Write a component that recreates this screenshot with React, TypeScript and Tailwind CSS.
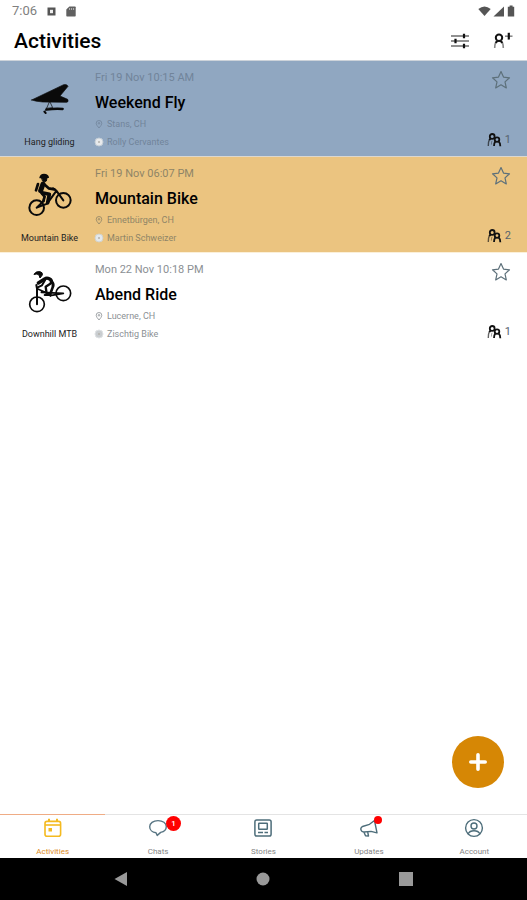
import type { ReactNode } from 'react';
import clsx from 'clsx';

interface Activity {
  id: number;
  sport: string;
  icon: ReactNode;
  date: string;
  title: string;
  place: string;
  host: string;
  participants: number;
  rowClass: string;
  textClass: string;
  avatarClass: string;
}

interface Tab {
  label: string;
  icon: ReactNode;
  badge?: string;
  dot?: boolean;
}

const activities: Activity[] = [
  {
    id: 1,
    sport: 'Hang gliding',
    icon: <HangGliderIcon />,
    date: 'Fri 19 Nov 10:15 AM',
    title: 'Weekend Fly',
    place: 'Stans, CH',
    host: 'Rolly Cervantes',
    participants: 1,
    rowClass: 'bg-[#90a7c1] border-[#cdd3da]',
    textClass: 'text-[#71849a]',
    avatarClass: 'fill-[#e8eaec] stroke-[#c3cdd6]',
  },
  {
    id: 2,
    sport: 'Mountain Bike',
    icon: <MountainBikeIcon />,
    date: 'Fri 19 Nov 06:07 PM',
    title: 'Mountain Bike',
    place: 'Ennetbürgen, CH',
    host: 'Martin Schweizer',
    participants: 2,
    rowClass: 'bg-[#ebc480] border-[#dcd8cf]',
    textClass: 'text-[#8f8467]',
    avatarClass: 'fill-[#e3e8ec] stroke-[#d2d3cc]',
  },
  {
    id: 3,
    sport: 'Downhill MTB',
    icon: <DownhillIcon />,
    date: 'Mon 22 Nov 10:18 PM',
    title: 'Abend Ride',
    place: 'Lucerne, CH',
    host: 'Zischtig Bike',
    participants: 1,
    rowClass: 'bg-white border-[#fbf0d9]',
    textClass: 'text-[#8b9094]',
    avatarClass: 'fill-[#c9cdd0] stroke-[#dfe2e4]',
  },
];

const tabs: Tab[] = [
  { label: 'Activities', icon: <CalendarIcon /> },
  { label: 'Chats', icon: <ChatIcon />, badge: '1' },
  { label: 'Stories', icon: <StoriesIcon /> },
  { label: 'Updates', icon: <MegaphoneIcon />, dot: true },
  { label: 'Account', icon: <AccountIcon /> },
];

export default function App() {
  return (
    <div className="flex min-h-screen flex-col bg-white font-[Roboto,sans-serif] text-black">
      <StatusBar />

      <header className="flex h-[38px] items-center justify-between px-3.5">
        <h1 className="text-[21px] leading-6 font-medium">Activities</h1>
        <div className="flex items-center gap-6">
          <button type="button" aria-label="Filter">
            <FilterIcon />
          </button>
          <button type="button" aria-label="Add friend">
            <AddPersonIcon />
          </button>
        </div>
      </header>

      <main className="relative flex-1">
        <ul>
          {activities.map((activity) => (
            <ActivityRow key={activity.id} activity={activity} />
          ))}
        </ul>
        <button
          type="button"
          aria-label="New activity"
          className="absolute right-[23px] bottom-[26px] flex size-[52px] items-center justify-center rounded-full bg-[#d68705]"
        >
          <svg viewBox="0 0 18 18" className="size-[18px]" fill="none" stroke="white" strokeWidth="3.6" strokeLinecap="round">
            <path d="M9 1.8v14.4M1.8 9h14.4" />
          </svg>
        </button>
      </main>

      <TabBar active="Activities" />
      <SystemNav />
    </div>
  );
}

function StatusBar() {
  return (
    <div className="flex h-[22px] items-center justify-between px-3 text-[#808080]">
      <div className="flex items-center gap-2.5">
        <span className="text-[13px] leading-4">7:06</span>
        <svg viewBox="0 0 9 9" className="size-[9px]">
          <path d="M.5.5h8v8h-8z" fill="#555" />
          <path d="M3 2.8h3v3.4H3z" fill="#eee" />
        </svg>
        <svg viewBox="0 0 10 11" className="h-[11px] w-[10px]">
          <path d="M3.4.5H9q.7 0 .7.7v8.6q0 .7-.7.7H1q-.7 0-.7-.7V3.6z" fill="#606060" />
          <path d="M3.6 2v2M5.6 2v2M7.6 2v2" stroke="#ccc" strokeWidth=".8" />
        </svg>
      </div>
      <div className="flex items-center gap-0.5">
        <svg viewBox="0 0 13 10" className="h-[10px] w-[13px]" fill="#555">
          <path d="M.3 3Q6.5-2.2 12.7 3L6.5 10z" />
        </svg>
        <svg viewBox="0 0 12 11" className="h-[11px] w-[12px]" fill="#555">
          <path d="M11 .5v10H.5z" />
        </svg>
        <svg viewBox="0 0 8 12" className="h-3 w-2" fill="#555">
          <path d="M2.600.5h3v1.200h1.600v9.800H.8V1.700h1.800z" />
        </svg>
      </div>
    </div>
  );
}

function ActivityRow({ activity }: { activity: Activity }) {
  return (
    <li className={clsx('flex border-t pb-2', activity.rowClass)}>
      {/* Sport */}
      <div className="flex w-[95px] shrink-0 flex-col items-center justify-between pt-[13px] pl-1">
        {activity.icon}
        <span className="text-[9px] leading-3 text-[#222]">{activity.sport}</span>
      </div>

      {/* Details */}
      <div className={clsx('min-w-0 flex-1 pt-[10px]', activity.textClass)}>
        <p className="text-[11px] leading-[14px]">{activity.date}</p>
        <h2 className="mt-2 text-base leading-5 font-medium text-black">{activity.title}</h2>
        <p className="mt-[5px] flex items-center gap-1 text-[9px] leading-3">
          <svg viewBox="0 0 8 9" className="h-[9px] w-2" fill="none" stroke="currentColor" strokeWidth=".8">
            <path d="M4 8Q1.2 5 1.2 3.3a2.8 2.8 0 0 1 5.6 0Q6.8 5 4 8z" />
            <circle cx="4" cy="3.3" r=".8" />
          </svg>
          {activity.place}
        </p>
        <p className="mt-1.5 flex items-center gap-1 text-[9px] leading-3">
          <svg viewBox="0 0 8 8" className="size-2 overflow-visible">
            <circle cx="4" cy="4" r="4" className={activity.avatarClass} />
            <circle cx="4" cy="4" r="1" fill="#b4b2ad" />
          </svg>
          {activity.host}
        </p>
      </div>

      {/* Favourite and participants */}
      <div className="flex flex-col items-end justify-between pt-[9px] pr-4">
        <button type="button" aria-label={`Favourite ${activity.title}`}>
          <svg viewBox="0 0 20 20" className="size-5" fill="none" stroke="#5d707a" strokeWidth="1.2" strokeLinejoin="round">
            <path d="M10 1.6l2.5 5.500 6 .7-4.500 4.100 1.300 6L10 14.800l-5.300 3.100 1.300-6-4.500-4.100 6-.7z" />
          </svg>
        </button>
        <span className="flex items-center gap-[3px] text-[11px] leading-4 text-[#56636d]">
          <PeopleIcon />
          {activity.participants}
        </span>
      </div>
    </li>
  );
}

function TabBar({ active }: { active: string }) {
  return (
    <nav className="grid h-11 grid-cols-5">
      {tabs.map((tab) => {
        const isActive = tab.label === active;
        return (
          <a
            key={tab.label}
            href={`#${tab.label.toLowerCase()}`}
            className={clsx(
              'flex flex-col items-center justify-between border-t pt-[3px]',
              isActive ? 'border-[#efac85] text-[#dc8a1c]' : 'border-[#e4e4e4] text-[#858585]',
            )}
          >
            <span className="relative">
              {tab.icon}
              {tab.badge && (
                <span className="absolute -top-0.5 left-[18px] flex size-[15px] items-center justify-center rounded-full bg-[#ff0000] text-[8px] font-medium text-white">
                  {tab.badge}
                </span>
              )}
              {tab.dot && <span className="absolute -top-0.5 right-[-3px] size-2 rounded-full bg-[#ff0000]" />}
            </span>
            <span className="text-[8px] leading-3">{tab.label}</span>
          </a>
        );
      })}
    </nav>
  );
}

function SystemNav() {
  return (
    <div className="grid h-[42px] grid-cols-3 items-center justify-items-center bg-black px-[50px]">
      <button type="button" aria-label="Back">
        <svg viewBox="0 0 14 14" className="size-3.5" fill="#999">
          <path d="M13 0v14L.5 7z" />
        </svg>
      </button>
      <button type="button" aria-label="Home">
        <svg viewBox="0 0 14 14" className="size-3.5" fill="#999">
          <circle cx="7" cy="7" r="6.5" />
        </svg>
      </button>
      <button type="button" aria-label="Recent apps">
        <svg viewBox="0 0 14 14" className="size-3.5" fill="#999">
          <path d="M0 0h14v14H0z" />
        </svg>
      </button>
    </div>
  );
}

/* Header icons */

function FilterIcon() {
  return (
    <svg viewBox="0 0 18 16" className="h-4 w-[18px]">
      <path d="M0 3h18M0 8h18M0 13h18" stroke="#909090" strokeWidth="2" />
      <path d="M13 .8v4.4M4.500 5.800v4.400M13 10.800v4.400" stroke="#111" strokeWidth="2.2" />
    </svg>
  );
}

function AddPersonIcon() {
  return (
    <svg viewBox="0 0 20 18" className="h-[18px] w-5" fill="none">
      <circle cx="6" cy="5.8" r="3.2" stroke="#111" strokeWidth="2" />
      <path d="M4.200 8.800Q1.800 10 1.700 16M7.800 8.800q2.400 1.200 2.500 7.200" stroke="#888" strokeWidth="1.600" />
      <path d="M4.500 8.700 2.800 11M7.500 8.700l1.700 2.300" stroke="#111" strokeWidth="2" />
      <path d="M12 4.200h7.500" stroke="#888" strokeWidth="1.600" />
      <path d="M15.800.8v6.800" stroke="#111" strokeWidth="2.200" />
    </svg>
  );
}

function PeopleIcon() {
  return (
    <svg viewBox="0 0 15 14" className="h-3.5 w-[15px]" fill="none" stroke="#111">
      <circle cx="5.200" cy="3.400" r="2.400" strokeWidth="1.800" />
      <path d="M3.800 5.400 2.200 7.200" strokeWidth="1.800" />
      <path d="M2.200 7.200Q1.300 8.600 1.300 13" strokeWidth="1.400" opacity=".65" />
      <path d="M5 7.800q-.6 1.200-.6 3.800" strokeWidth="1" opacity=".4" />
      <circle cx="10" cy="6.600" r="2.300" strokeWidth="1.800" />
      <path d="M8.400 8.400Q7 10 7 13M11.600 8.400q1.700 1.200 1.700 4.800" strokeWidth="1.800" />
    </svg>
  );
}

/* Sport icons */

function HangGliderIcon() {
  return (
    <svg viewBox="72 42 156 156" className="size-[52px]" fill="none" stroke="#0a0a0a" strokeLinecap="round" strokeLinejoin="round">
      <path d="M95 120 191 74Q202 72 204 79L180 108 203 118Q207 126 200 127L128 126Q106 124 95 120z" fill="#0a0a0a" strokeWidth="2" />
      <path d="M148 126 136 154M150 126l8 17-20 2" strokeWidth="3" opacity=".7" />
      <path d="M139 149q26-4 49-2" strokeWidth="7" />
      <path d="M133 155l4 4" strokeWidth="6" />
    </svg>
  );
}

function MountainBikeIcon() {
  return (
    <svg viewBox="0 0 156 156" className="size-[52px]" fill="none" stroke="#0a0a0a" strokeLinecap="round" strokeLinejoin="round">
      <circle cx="38" cy="113" r="22" strokeWidth="6" />
      <circle cx="118" cy="91" r="22" strokeWidth="6" />
      {/* frame */}
      <path d="M38 113 60 92M38 113l32-12M70 100l26-36M118 91 97 62 87 55" strokeWidth="6" />
      {/* rider */}
      <path d="M48 23Q50 13 60 13q11 0 13 9z" fill="#0a0a0a" strokeWidth="4" />
      <path d="M54 24h15l-2 9q-6 5-11 0z" fill="#0a0a0a" strokeWidth="3" />
      <path d="M42 42 36 61" strokeWidth="8" />
      <path d="M57 42 50 62" strokeWidth="15" />
      <path d="M63 45 74 55 91 58" strokeWidth="8" />
      <path d="M54 68 76 73 71 98" strokeWidth="11" />
      <path d="M54 71 62 80 58 93" strokeWidth="8" />
    </svg>
  );
}

function DownhillIcon() {
  return (
    <svg viewBox="0 0 156 156" className="size-[52px]" fill="none" stroke="#0a0a0a" strokeLinecap="round" strokeLinejoin="round">
      <circle cx="39" cy="115" r="22" strokeWidth="5" />
      <circle cx="118" cy="82" r="22" strokeWidth="5" />
      {/* frame */}
      <path d="M39 115V68L37 57" strokeWidth="6" />
      <path d="M40 68 70 82 80 90M52 79 118 82M78 89 118 82" strokeWidth="5" />
      {/* rider */}
      <path d="M31 23Q37 15 48 17q9 2 7 10l-7 9-3-9Q40 22 31 25z" fill="#0a0a0a" strokeWidth="3" />
      <path d="M43 51 62 39Q68 34 77 39q7 4 5 11" strokeWidth="10" />
      <path d="M63 43 54 58 41 64" strokeWidth="6" />
      <path d="M83 46q8 8 3 18L78 86" strokeWidth="8" />
      <path d="M79 53 65 62 68 84" strokeWidth="7" />
      <path d="M62 87h18" strokeWidth="6" />
    </svg>
  );
}

/* Tab icons */

function CalendarIcon() {
  return (
    <svg viewBox="0 0 20 20" className="size-5" fill="none" stroke="#f4ba20" strokeWidth="1.6">
      <rect x="2" y="3.400" width="15.600" height="14.800" rx="2" />
      <path d="M2 7h15.600" />
      <path d="M6 .8v3M14 .8v3" strokeWidth="2" />
      <rect x="5.500" y="10" width="3.500" height="3.500" fill="#f4ba20" stroke="none" />
    </svg>
  );
}

function ChatIcon() {
  return (
    <svg viewBox="0 0 20 20" className="size-5" fill="none" stroke="#587583" strokeWidth="1.400" strokeLinejoin="round">
      <path d="M10 2.600c4.800 0 8.300 2.500 8.300 6 0 3.200-2.700 5.300-5.600 5.800L9.200 17.400 8 14.700C4.400 14.400 1.700 12 1.700 8.700c0-3.500 3.500-6.100 8.300-6.100z" />
    </svg>
  );
}

function StoriesIcon() {
  return (
    <svg viewBox="0 0 20 20" className="size-5" fill="none" stroke="#4d6d7a" strokeWidth="1.500">
      <rect x="1.900" y="1.900" width="16.200" height="16.200" rx="1.800" />
      <rect x="5.700" y="5.200" width="8.600" height="6" rx=".5" />
      <path d="M5 14.400h5M11.500 14.400H15" />
    </svg>
  );
}

function MegaphoneIcon() {
  return (
    <svg viewBox="0 0 20 20" className="size-5" fill="none" stroke="#4d6d7a" strokeWidth="1.400" strokeLinejoin="round">
      <path d="M15.500 2.500 10.500 6.300 3.500 8.500Q1.200 9.800 2 12q.8 2.300 3.300 2l6.700-.6 6 1.500z" />
      <path d="M5 14.200l1.500 3.600 3 .2-.8-4" />
    </svg>
  );
}

function AccountIcon() {
  return (
    <svg viewBox="0 0 20 20" className="size-5" fill="none" stroke="#4d6d7a" strokeWidth="1.400">
      <circle cx="10" cy="10" r="8.400" />
      <circle cx="10" cy="8" r="3" />
      <path d="M4.200 15.800q1.400-3 5.800-3t5.800 3" />
    </svg>
  );
}
